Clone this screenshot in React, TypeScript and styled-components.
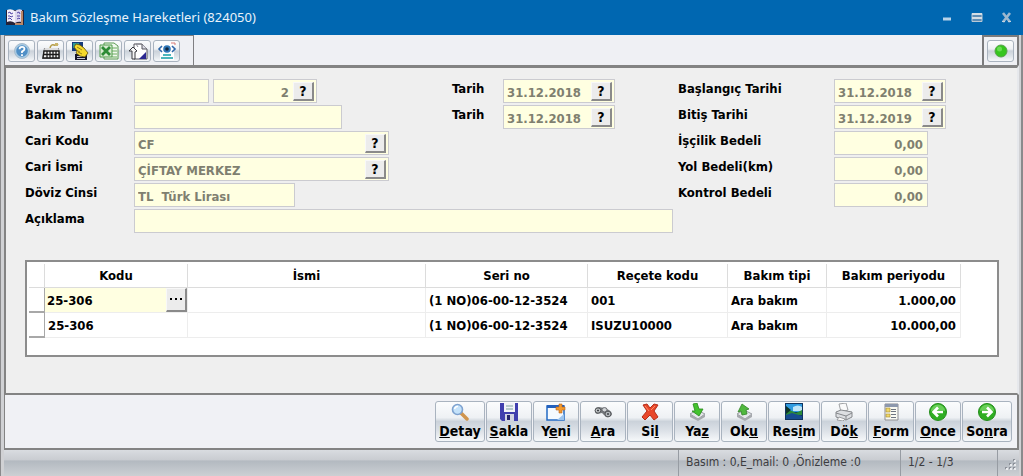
import React from 'react';
import styled, { createGlobalStyle, css } from 'styled-components';

const uiFont = "'DejaVu Sans Condensed', 'DejaVu Sans', 'Open Sans', sans-serif";

const GlobalStyle = createGlobalStyle`
  * { box-sizing: border-box; }
  body { margin: 0; font-family: ${uiFont}; font-size: 13px; color: #000; }
  button, input { font-family: inherit; }
  svg { display: block; }
`;

const Window = styled.div`
  min-height: 100vh;
  display: flex;
  flex-direction: column;
  background: #efefef;
`;

const TitleBar = styled.header`
  height: 35px;
  flex: none;
  display: flex;
  align-items: center;
  gap: 5px;
  padding: 0 8px 2px 6px;
  background: #0067b1;
`;

const Title = styled.h1`
  margin: 0;
  flex: 1;
  font: 400 13px/20px 'Noto Sans', 'Open Sans', sans-serif;
  color: #e8f2fa;
`;

const WindowControls = styled.div`
  display: flex;
  gap: 14px;
`;

const ControlButton = styled.button`
  width: 16px;
  height: 16px;
  padding: 0;
  border: 0;
  background: none;
`;

const Frame = styled.div`
  flex: 1;
  display: flex;
  flex-direction: column;
  border: solid #8a8a8c;
  border-width: 0 2px 0 1px;
  padding: 0 2px 0 3px;
  background: #d0d1d4;
`;

const TopBar = styled.div`
  display: flex;
  justify-content: space-between;
  height: 30px;
  background: #eff0f4;
  border-left: 1px solid #858585;
`;

const ToolGroup = styled.div`
  display: flex;
  align-items: center;
  gap: 2px;
  padding: 0 13px 0 3px;
  border: solid #7f7f82;
  border-width: 1px 1px 0 0;
`;

const StatusBox = styled.div`
  display: flex;
  align-items: center;
  padding: 0 3px;
  border: 2px solid #7b7b7d;
  border-bottom: 0;
`;

const glossy = css`
  border: 1px solid #a9b3bf;
  border-radius: 3px;
  background: linear-gradient(#fbfcfd 0%, #eef1f4 40%, #cbd2da 50%, #dde2e8 75%, #f6f8fa 100%);
`;

const ToolButton = styled.button`
  ${glossy}
  width: 27px;
  height: 22px;
  padding: 0;
  display: flex;
  align-items: center;
  justify-content: center;
`;

const Panel = styled.main`
  flex: 1;
  display: flex;
  flex-direction: column;
  padding: 11px 18px 12px 19px;
  border: solid #838383;
  border-width: 3px 0 2px 2px;
  border-right: 2px solid #e6e8ec;
  background: #efefef;
`;

const Form = styled.form`
  display: grid;
  grid-template-columns: 109px 318px 51px 175px 156px 1fr;
  grid-auto-rows: 24px;
  row-gap: 2px;
`;

const Label = styled.label<{ $col: number; $row: number }>`
  grid-column: ${p => p.$col};
  grid-row: ${p => p.$row};
  font-weight: 700;
  line-height: 20px;
`;

const Cell = styled.div<{ $col: number; $row: number; $span?: number }>`
  grid-column: ${p => p.$col} / span ${p => p.$span ?? 1};
  grid-row: ${p => p.$row};
  display: flex;
  gap: 4px;
`;

const FieldBox = styled.div<{ $width: number }>`
  width: ${p => p.$width}px;
  display: flex;
  align-items: center;
  padding-right: 2px;
  border: 1px solid #cbcbd0;
  background: #ffffe1;
`;

const FieldInput = styled.input<{ $right?: boolean }>`
  flex: 1;
  min-width: 0;
  height: 20px;
  padding: 2px 2px 0 3px;
  border: 0;
  outline: 0;
  background: transparent;
  font-size: 13px;
  font-weight: 700;
  color: #7f7f70;
  text-align: ${p => (p.$right ? 'right' : 'left')};
`;

const raised = css`
  padding: 0;
  border: solid;
  border-width: 1px 2px 2px 1px;
  border-color: #f8f8f8 #8a8a8a #8a8a8a #f8f8f8;
  background: #ececec;
  color: #000;
  font-weight: 700;
`;

const LookupButton = styled.button`
  ${raised}
  width: 21px;
  height: 19px;
  margin-left: 2px;
  font-size: 14px;
  line-height: 16px;
`;

const GridPanel = styled.section`
  margin-top: 27px;
  height: 97px;
  padding: 2px 36px 0 2px;
  border: 2px solid #8c8c8c;
  background: #fff;
`;

const DataTable = styled.table`
  width: 100%;
  table-layout: fixed;
  border-collapse: separate;
  border-spacing: 0;
  font-weight: 700;
`;

const HeadCell = styled.th`
  height: 24px;
  padding: 0;
  border: solid #dcdcdc;
  border-width: 0 1px 1px 0;
  text-align: center;
`;

const BodyCell = styled.td<{ $right?: boolean }>`
  height: 25px;
  padding: 0 4px 0 3px;
  border: solid #ededed;
  border-width: 0 1px 1px 0;
  text-align: ${p => (p.$right ? 'right' : 'left')};
`;

const RowMark = styled.td`
  padding: 0;
  border: solid #a8a8a8;
  border-width: 0 1px 2px 0;
`;

const EditCell = styled.td`
  height: 25px;
  padding: 0;
  border: solid #ededed;
  border-width: 0 1px 1px 0;
`;

const EditRow = styled.div`
  display: flex;
  height: 24px;
  background: #ffffe1;
`;

const EditInput = styled.input`
  flex: 1;
  min-width: 0;
  padding: 0 2px;
  border: 0;
  outline: 0;
  background: transparent;
  font-size: 13px;
  font-weight: 700;
`;

const MoreButton = styled.button`
  ${raised}
  width: 21px;
  display: flex;
  align-items: center;
  justify-content: center;
`;

const ActionBar = styled.nav`
  display: flex;
  justify-content: flex-end;
  gap: 1px;
  height: 55px;
  padding: 6px 5px 0 0;
  border: solid #838383;
  border-width: 0 2px 2px 1px;
  background: #f0f1f5;
`;

const ActionButton = styled.button<{ $wide?: number }>`
  ${glossy}
  width: ${p => p.$wide ?? 46}px;
  height: 41px;
  padding: 1px 0 0;
  display: flex;
  flex-direction: column;
  align-items: center;
  font-size: 14px;
  font-weight: 700;
  line-height: 20px;
  color: #000;
`;

const StatusBar = styled.footer`
  height: 26px;
  flex: none;
  display: flex;
  justify-content: flex-end;
  align-items: stretch;
  background: linear-gradient(#d9dce0 0%, #c9ccd1 38%, #b3b9c0 42%, #bfc4ca 70%, #cdd0d3 100%);
  font-size: 12px;
  line-height: 24px;
  color: #3c3c40;
`;

const StatusCell = styled.div<{ $width: number }>`
  width: ${p => p.$width}px;
  padding-left: 7px;
  border-left: 1px solid #979ca3;
  white-space: pre;
`;

const Grip = styled.div`
  width: 22px;
  display: flex;
  align-items: flex-end;
  padding: 0 0 5px 5px;
  border-left: 1px solid #979ca3;
`;

const Svg = ({ w = 20, h = 18, children }: { w?: number; h?: number; children: React.ReactNode }) => (
  <svg width={w} height={h} viewBox={`0 0 ${w} ${h}`} aria-hidden="true">{children}</svg>
);

const BookIcon = () => (
  <Svg w={19} h={18}>
    <path d="M0 2h18v15H0z" fill="#252238" />
    <path d="M1 2q4-2 8 1v12q-4-3-8-1z" fill="#f3f0fa" />
    <path d="M9 3q4-3 7-1v12q-4-1-7 1z" fill="#ddd7ee" />
    <path d="M2 5l2-1 1 2 2-1M2 8h2l1 1 2-1M2 11l2-1 2 2M11 5l2-1 1 2M11 8h3M11 11l2-1 1 1" stroke="#5547a8" fill="none" />
    <path d="M16 3v13H9" stroke="#b88767" strokeWidth="2" fill="none" />
  </Svg>
);

const HelpIcon = () => (
  <Svg w={18}>
    <circle cx="9" cy="9" r="7.5" fill="#a9cbe4" stroke="#a7bccc" />
    <circle cx="9" cy="9" r="5.8" fill="#4f8fc6" />
    <path d="M6.5 7.2Q6.6 4.8 9 4.8T11.500 7Q11.500 8.300 9 9.600V11M9 12.300V14" stroke="#fff" strokeWidth="1.800" fill="none" />
  </Svg>
);

const KeyboardIcon = () => (
  <Svg>
    <path d="M9 6q1-4 4-3t4-1" stroke="#b39b45" strokeWidth="1.500" fill="none" />
    <path d="M14 1h3v3h-3z" fill="#c9b468" />
    <path d="M3 6h15l1 11H1z" fill="#8c8d90" />
    <path d="M4 6h13l1 3H3z" fill="#dcdcdc" />
    <path d="M3 9h15v7H2z" fill="#f1f1f1" stroke="#1a1a1a" strokeWidth="1.400" />
    <path d="M3 12.500h15M6 9v7M9 9v7M12 9v7M15 9v7" stroke="#1a1a1a" strokeWidth="1.300" />
  </Svg>
);

const HandIcon = () => (
  <Svg>
    <path d="M2 0h11v9H2z" fill="#173c7c" />
    <path d="M3 1h6v5H3z" fill="#2f9a94" />
    <path d="M5 12h12v6H5z" fill="#15152a" />
    <path d="M7 14.500h8M7 16.500h8" stroke="#c3c3d0" />
    <path d="M4 5l2-3 4 1 4 3 4 5-3 4-5-1-4-3 1-2z" fill="#f5d92b" stroke="#5c4c0a" strokeWidth=".8" />
    <path d="M7 5l5 3M6 8l4 2M8 10l4 2" stroke="#7f6b12" strokeWidth=".8" />
  </Svg>
);

const ExcelIcon = () => (
  <Svg>
    <path d="M5 1h10l4 3v13H5z" fill="#f1f8ee" stroke="#5b9b52" />
    <path d="M13 6h5M13 9h5M13 12h5M13 15h5" stroke="#6aad5e" />
    <path d="M1 3h12v12H1z" fill="#d7ebd0" stroke="#4f9a4b" />
    <path d="M3 5l8 8M11 5l-8 8" stroke="#2c8b35" strokeWidth="2.800" />
  </Svg>
);

const PageIcon = () => (
  <Svg>
    <path d="M6 2h8l5 5v10H6z" fill="#fff" stroke="#55555c" />
    <path d="M14 2v5h5" fill="#dcdce4" stroke="#55555c" />
    <path d="M18 10v7h-7z" fill="#2b2891" />
    <path d="M1 9l4-4 4 4-2 1v7H4V9z" fill="#f6f6f6" stroke="#3a3a40" />
    <path d="M10 5l-2-3h5" stroke="#8a8a92" fill="none" />
  </Svg>
);

const EyeIcon = () => (
  <Svg>
    <path d="M3 0h14v18H3z" fill="#fdfdfe" />
    <path d="M5 4L2 7l3 3M15 4l3 3-3 3" stroke="#2d66a8" strokeWidth="1.600" fill="none" />
    <circle cx="10" cy="7" r="3.800" fill="#2f77b8" />
    <circle cx="10" cy="7" r="1.800" fill="#11263e" />
    <path d="M6 13h8M4 16h12" stroke="#4cb6bc" strokeWidth="2" />
    <path d="M14 1h4v2" stroke="#d97a77" fill="none" />
  </Svg>
);

const GreenLight = () => (
  <Svg w={14} h={14}>
    <circle cx="7" cy="7" r="6" fill="#35c51f" stroke="#56a04b" />
    <circle cx="5.500" cy="5" r="2.500" fill="#68dd52" />
  </Svg>
);

const SearchIcon = () => (
  <Svg>
    <path d="M11 10l6 6" stroke="#d0954e" strokeWidth="3.500" strokeLinecap="round" />
    <circle cx="7.500" cy="6.500" r="5" fill="#c4e2fa" stroke="#7ea2cf" strokeWidth="1.600" />
    <path d="M4.500 6q1-3 3.500-2.500" stroke="#fff" strokeWidth="1.500" fill="none" />
  </Svg>
);

const SaveIcon = () => (
  <Svg>
    <path d="M1 0h18v18H3l-2-2z" fill="#403fae" />
    <path d="M5 0h11v9H5z" fill="#f1f3f8" />
    <path d="M7 3h7M7 6h7" stroke="#7fa39f" />
    <path d="M6 11h9v7H6z" fill="#d2d4e2" />
    <path d="M8 12h3v5H8z" fill="#26256d" />
  </Svg>
);

const NewIcon = () => (
  <Svg>
    <path d="M1 3h17v14H1z" fill="#f5faff" stroke="#2269c4" strokeWidth="1.500" />
    <path d="M1 2h17v3H1z" fill="#2461bd" />
    <path d="M11 17l7-6v6z" fill="#9cc4ee" />
    <path d="M13 1h3v3h3v3h-3v3h-3V7h-3V4h3z" fill="#f39a2d" stroke="#b8611b" strokeWidth=".6" />
  </Svg>
);

const BinocularsIcon = () => (
  <Svg>
    <path d="M2 6q1-2 4-2l5 1 5 2q3 2 3 4t-3 3-4-1l-3-3-5 1q-3-1-2-5z" fill="#74787b" />
    <ellipse cx="5" cy="7.500" rx="2.800" ry="2.600" fill="#c3c7c9" stroke="#54575a" />
    <ellipse cx="11.500" cy="6.800" rx="2.600" ry="2.200" fill="#d3d6d8" stroke="#62656a" />
    <ellipse cx="15" cy="11" rx="3" ry="2.800" fill="#b4b9bc" stroke="#55585b" />
    <path d="M4 7.500h2M14 11h2" stroke="#3e4246" strokeWidth="1.500" />
  </Svg>
);

const DeleteIcon = () => (
  <Svg>
    <path d="M3 2l4-1 3 4 4-4 4 1-4 6 4 6-4 3-4-5-5 5-3-3 5-6z" fill="#e8472a" stroke="#b62d19" strokeLinejoin="round" />
    <path d="M5 3l4 5M15 3l-4 4" stroke="#ff8c68" />
  </Svg>
);

const Tray = () => (
  <>
    <path d="M3 11l7-4 8 4-7 5z" fill="#e5e7ea" stroke="#9b9ea3" />
    <path d="M3 11v3l8 4 7-4v-3l-7 5z" fill="#a6a9ae" />
  </>
);

const WriteIcon = () => (
  <Svg><Tray /><path d="M6 1l4-1 2 6h4l-4 7-7-5h3z" fill="#43c22e" stroke="#278a1b" strokeWidth=".8" /></Svg>
);

const ReadIcon = () => (
  <Svg><Tray /><path d="M8 12l-1-4-3 1 4-8 7 5-3 1 1 4z" fill="#50b83e" stroke="#318527" strokeWidth=".8" /></Svg>
);

const ImageIcon = () => (
  <Svg>
    <path d="M1 0h18v17H1z" fill="#10345f" />
    <path d="M2 1h16v8H2z" fill="#2f9be0" />
    <path d="M9 4q5-3 9 0v4H9z" fill="#bfe5f7" />
    <path d="M2 7l6 1 4 2 6-3v5H2z" fill="#2b8a3a" />
    <path d="M2 12l6-2 10 3v3H2z" fill="#174c90" />
    <path d="M2 3l5 4-5 4z" fill="#0e3327" />
  </Svg>
);

const PrintIcon = () => (
  <Svg>
    <path d="M5 1l7-1 2 7-7 2z" fill="#fafafa" stroke="#a0a2a5" />
    <path d="M2 9l5-2 11 2v5l-6 3-10-3z" fill="#dddfe2" stroke="#85888c" />
    <path d="M2 10l10 3 6-3M12 13v4" stroke="#85888c" fill="none" />
    <path d="M5 14l-2 3 6 1 2-2z" fill="#f8f8f8" stroke="#9b9da0" />
  </Svg>
);

const FormIcon = () => (
  <Svg>
    <path d="M4 1h13v16H4z" fill="#fafaf2" stroke="#8c8c90" />
    <path d="M4 1h13v3H4z" fill="#8d98ad" />
    <path d="M5 5h4v4H5zM5 11h4v3H5z" fill="#f0d868" stroke="#a68931" strokeWidth=".6" />
    <path d="M10 6.500h5M10 8.500h5M10 11.500h5M10 14.500h5" stroke="#6f7580" />
  </Svg>
);

const ArrowIcon = ({ forward }: { forward?: boolean }) => (
  <Svg>
    <circle cx="10" cy="9" r="8.500" fill="#2fae23" stroke="#248c1b" />
    <path d="M3 8a7 6.500 0 0 1 14 0q-7-2-14 0z" fill="#69cf58" />
    <path d={forward ? 'M5 9h9M10 4.500L14.500 9L10 13.500' : 'M15 9H6M10 4.500L5.500 9L10 13.500'} stroke="#fff" strokeWidth="2.600" fill="none" />
  </Svg>
);

type FieldProps = {
  id: string;
  label: string;
  row: number;
  group: number;
  width: number;
  value?: string;
  lookup?: boolean;
  right?: boolean;
  span?: number;
};

const Lookup = ({ name }: { name: string }) => (
  <LookupButton type="button" aria-label={`${name} ara`}>?</LookupButton>
);

const Field = ({ id, label, row, group, width, value = '', lookup, right, span }: FieldProps) => (
  <>
    <Label htmlFor={id} $col={group * 2 - 1} $row={row}>{label}</Label>
    <Cell $col={group * 2} $row={row} $span={span}>
      <FieldBox $width={width}>
        <FieldInput id={id} defaultValue={value} $right={right} />
        {lookup && <Lookup name={label} />}
      </FieldBox>
    </Cell>
  </>
);

const tools = [
  { name: 'Yardım', Icon: HelpIcon },
  { name: 'Klavye', Icon: KeyboardIcon },
  { name: 'Seçim', Icon: HandIcon },
  { name: 'Excel', Icon: ExcelIcon },
  { name: 'Sayfa', Icon: PageIcon },
  { name: 'Görünüm', Icon: EyeIcon },
];

const actions: { parts: [string, string, string]; Icon: () => React.ReactElement; wide?: number }[] = [
  { parts: ['', 'D', 'etay'], Icon: SearchIcon, wide: 50 },
  { parts: ['', 'S', 'akla'], Icon: SaveIcon },
  { parts: ['Y', 'e', 'ni'], Icon: NewIcon },
  { parts: ['', 'A', 'ra'], Icon: BinocularsIcon },
  { parts: ['Si', 'l', ''], Icon: DeleteIcon },
  { parts: ['Ya', 'z', ''], Icon: WriteIcon },
  { parts: ['Ok', 'u', ''], Icon: ReadIcon },
  { parts: ['Res', 'i', 'm'], Icon: ImageIcon, wide: 52 },
  { parts: ['Dö', 'k', ''], Icon: PrintIcon },
  { parts: ['', 'F', 'orm'], Icon: FormIcon },
  { parts: ['', 'O', 'nce'], Icon: () => <ArrowIcon /> },
  { parts: ['So', 'n', 'ra'], Icon: () => <ArrowIcon forward />, wide: 50 },
];

export default function App() {
  return (
    <Window>
      <GlobalStyle />
      <TitleBar>
        <BookIcon />
        <Title>Bakım Sözleşme Hareketleri (824050)</Title>
        <WindowControls>
          <ControlButton aria-label="Küçült"><Svg w={16} h={16}><path d="M4 10h8" stroke="#b9d3e8" strokeWidth="3" /></Svg></ControlButton>
          <ControlButton aria-label="Büyüt"><Svg w={16} h={16}><path d="M3 4.500h10v8H3z" fill="#5e8db5" stroke="#b9c9d6" /><path d="M3 5h10M3 9h10" stroke="#d3dde5" strokeWidth="2" /></Svg></ControlButton>
          <ControlButton aria-label="Kapat"><Svg w={16} h={16}><path d="M4 4l7 9M11 4l-7 9" stroke="#9db8cf" strokeWidth="2.600" /><path d="M3 12.500h3M9 12.500h3" stroke="#c4d3df" /></Svg></ControlButton>
        </WindowControls>
      </TitleBar>
      <Frame>
        <TopBar>
          <ToolGroup>
            {tools.map(({ name, Icon }) => (
              <ToolButton key={name} type="button" aria-label={name}><Icon /></ToolButton>
            ))}
          </ToolGroup>
          <StatusBox>
            <ToolButton type="button" aria-label="Bağlantı"><GreenLight /></ToolButton>
          </StatusBox>
        </TopBar>
        <Panel>
          <Form>
            <Label htmlFor="evrakSeri" $col={1} $row={1}>Evrak no</Label>
            <Cell $col={2} $row={1}>
              <FieldBox $width={75}><FieldInput id="evrakSeri" /></FieldBox>
              <FieldBox $width={104}>
                <FieldInput aria-label="Evrak sıra no" defaultValue="2" $right />
                <Lookup name="Evrak no" />
              </FieldBox>
            </Cell>
            <Field id="tanim" label="Bakım Tanımı" row={2} group={1} width={208} />
            <Field id="cariKodu" label="Cari Kodu" row={3} group={1} width={255} value="CF" lookup />
            <Field id="cariIsmi" label="Cari İsmi" row={4} group={1} width={255} value="ÇİFTAY MERKEZ" lookup />
            <Field id="doviz" label="Döviz Cinsi" row={5} group={1} width={161} value="TL  Türk Lirası" />
            <Field id="aciklama" label="Açıklama" row={6} group={1} width={539} span={3} />
            <Field id="tarih1" label="Tarih" row={1} group={2} width={112} value="31.12.2018" lookup />
            <Field id="tarih2" label="Tarih" row={2} group={2} width={112} value="31.12.2018" lookup />
            <Field id="baslangic" label="Başlangıç Tarihi" row={1} group={3} width={112} value="31.12.2018" lookup />
            <Field id="bitis" label="Bitiş Tarihi" row={2} group={3} width={112} value="31.12.2019" lookup />
            <Field id="iscilik" label="İşçilik Bedeli" row={3} group={3} width={94} value="0,00" right />
            <Field id="yol" label="Yol Bedeli(km)" row={4} group={3} width={94} value="0,00" right />
            <Field id="kontrol" label="Kontrol Bedeli" row={5} group={3} width={94} value="0,00" right />
          </Form>
          <GridPanel>
            <DataTable>
              <colgroup>
                <col width="16" /><col width="143" /><col /><col width="162" />
                <col width="140" /><col width="99" /><col width="134" />
              </colgroup>
              <thead>
                <tr>
                  <HeadCell aria-label="Satır" />
                  <HeadCell>Kodu</HeadCell>
                  <HeadCell>İsmi</HeadCell>
                  <HeadCell>Seri no</HeadCell>
                  <HeadCell>Reçete kodu</HeadCell>
                  <HeadCell>Bakım tipi</HeadCell>
                  <HeadCell>Bakım periyodu</HeadCell>
                </tr>
              </thead>
              <tbody>
                <tr>
                  <RowMark />
                  <EditCell>
                    <EditRow>
                      <EditInput aria-label="Kodu" defaultValue="25-306" />
                      <MoreButton type="button" aria-label="Kod seç">
                        <Svg w={14} h={4}><path d="M1 0h2v2H1zM6 0h2v2H6zM11 0h2v2h-2z" /></Svg>
                      </MoreButton>
                    </EditRow>
                  </EditCell>
                  <BodyCell />
                  <BodyCell>(1 NO)06-00-12-3524</BodyCell>
                  <BodyCell>001</BodyCell>
                  <BodyCell>Ara bakım</BodyCell>
                  <BodyCell $right>1.000,00</BodyCell>
                </tr>
                <tr>
                  <RowMark />
                  <BodyCell>25-306</BodyCell>
                  <BodyCell />
                  <BodyCell>(1 NO)06-00-12-3524</BodyCell>
                  <BodyCell>ISUZU10000</BodyCell>
                  <BodyCell>Ara bakım</BodyCell>
                  <BodyCell $right>10.000,00</BodyCell>
                </tr>
              </tbody>
            </DataTable>
          </GridPanel>
        </Panel>
        <ActionBar>
          {actions.map(({ parts: [before, key, after], Icon, wide }) => (
            <ActionButton key={before + key + after} type="button" $wide={wide}>
              <Icon />
              <span>{before}<u>{key}</u>{after}</span>
            </ActionButton>
          ))}
        </ActionBar>
        <StatusBar>
          <StatusCell $width={222}>Basım : 0,E_mail: 0 ,Önizleme :0</StatusCell>
          <StatusCell $width={97}>1/2 - 1/3</StatusCell>
          <Grip>
            <Svg w={14} h={12}>
              <path d="M10 0h2v2h-2zM6 4h2v2H6zM10 4h2v2h-2zM2 8h2v2H2zM6 8h2v2H6zM10 8h2v2h-2z" fill="#8b9098" />
              <path d="M11 1h2v2h-2zM7 5h2v2H7zM11 5h2v2h-2zM3 9h2v2H3zM7 9h2v2H7zM11 9h2v2h-2z" fill="#e9ebee" />
            </Svg>
          </Grip>
        </StatusBar>
      </Frame>
    </Window>
  );
}
